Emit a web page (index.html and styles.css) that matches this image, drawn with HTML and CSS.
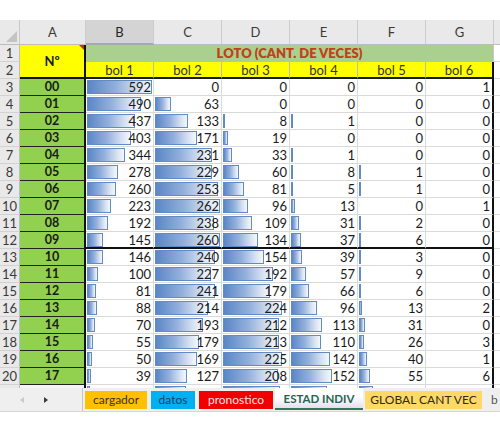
FILE: index.html
```html
<!DOCTYPE html>
<html>
<head>
<meta charset="utf-8">
<link rel="stylesheet" href="styles.css">
</head>
<body>
<div class="top"></div>
<div class="sheet">
  <div class="corner"><svg width="20" height="25" viewBox="0 0 20 25"><polygon points="17,11 17,22 6,22" fill="#C4C4C4"/></svg></div>
  <div class="ch">A</div>
  <div class="ch sel">B</div>
  <div class="ch">C</div>
  <div class="ch">D</div>
  <div class="ch">E</div>
  <div class="ch">F</div>
  <div class="ch">G</div>
  <div class="ch last"></div>

  <div class="rh">1</div>
  <div class="nom">Nº<span class="cmt"></span></div>
  <div class="title">LOTO (CANT. DE VECES)</div>
  <div class="h"></div>

  <div class="rh">2</div>
  <div class="bol">bol 1</div>
  <div class="bol">bol 2</div>
  <div class="bol">bol 3</div>
  <div class="bol">bol 4</div>
  <div class="bol">bol 5</div>
  <div class="bol g">bol 6</div>
  <div class="h"></div>

  <div class="rh">3</div><div class="a">00</div>
  <div class="c"><i class="bar" style="width:65px"></i><span class="v">592</span></div>
  <div class="c"><span class="v">0</span></div>
  <div class="c"><span class="v">0</span></div>
  <div class="c"><span class="v">0</span></div>
  <div class="c"><span class="v">0</span></div>
  <div class="c g"><span class="v">1</span></div><div class="h"></div>

  <div class="rh">4</div><div class="a">01</div>
  <div class="c"><i class="bar" style="width:54px"></i><span class="v">490</span></div>
  <div class="c"><i class="bar" style="width:16px"></i><span class="v">63</span></div>
  <div class="c"><span class="v">0</span></div>
  <div class="c"><span class="v">0</span></div>
  <div class="c"><span class="v">0</span></div>
  <div class="c g"><span class="v">0</span></div><div class="h"></div>

  <div class="rh">5</div><div class="a">02</div>
  <div class="c"><i class="bar" style="width:48px"></i><span class="v">437</span></div>
  <div class="c"><i class="bar" style="width:33px"></i><span class="v">133</span></div>
  <div class="c"><i class="bar" style="width:2px"></i><span class="v">8</span></div>
  <div class="c"><i class="bar" style="width:2px"></i><span class="v">1</span></div>
  <div class="c"><span class="v">0</span></div>
  <div class="c g"><span class="v">0</span></div><div class="h"></div>

  <div class="rh">6</div><div class="a">03</div>
  <div class="c"><i class="bar" style="width:44px"></i><span class="v">403</span></div>
  <div class="c"><i class="bar" style="width:42px"></i><span class="v">171</span></div>
  <div class="c"><i class="bar" style="width:5px"></i><span class="v">19</span></div>
  <div class="c"><span class="v">0</span></div>
  <div class="c"><span class="v">0</span></div>
  <div class="c g"><span class="v">0</span></div><div class="h"></div>

  <div class="rh">7</div><div class="a">04</div>
  <div class="c"><i class="bar" style="width:38px"></i><span class="v">344</span></div>
  <div class="c"><i class="bar" style="width:57px"></i><span class="v">231</span></div>
  <div class="c"><i class="bar" style="width:9px"></i><span class="v">33</span></div>
  <div class="c"><i class="bar" style="width:2px"></i><span class="v">1</span></div>
  <div class="c"><span class="v">0</span></div>
  <div class="c g"><span class="v">0</span></div><div class="h"></div>

  <div class="rh">8</div><div class="a">05</div>
  <div class="c"><i class="bar" style="width:31px"></i><span class="v">278</span></div>
  <div class="c"><i class="bar" style="width:57px"></i><span class="v">229</span></div>
  <div class="c"><i class="bar" style="width:16px"></i><span class="v">60</span></div>
  <div class="c"><i class="bar" style="width:2px"></i><span class="v">8</span></div>
  <div class="c"><i class="bar" style="width:2px"></i><span class="v">1</span></div>
  <div class="c g"><span class="v">0</span></div><div class="h"></div>

  <div class="rh">9</div><div class="a">06</div>
  <div class="c"><i class="bar" style="width:29px"></i><span class="v">260</span></div>
  <div class="c"><i class="bar" style="width:63px"></i><span class="v">253</span></div>
  <div class="c"><i class="bar" style="width:21px"></i><span class="v">81</span></div>
  <div class="c"><i class="bar" style="width:2px"></i><span class="v">5</span></div>
  <div class="c"><i class="bar" style="width:2px"></i><span class="v">1</span></div>
  <div class="c g"><span class="v">0</span></div><div class="h"></div>

  <div class="rh">10</div><div class="a">07</div>
  <div class="c"><i class="bar" style="width:24px"></i><span class="v">223</span></div>
  <div class="c"><i class="bar" style="width:65px"></i><span class="v">262</span></div>
  <div class="c"><i class="bar" style="width:25px"></i><span class="v">96</span></div>
  <div class="c"><i class="bar" style="width:4px"></i><span class="v">13</span></div>
  <div class="c"><span class="v">0</span></div>
  <div class="c g"><span class="v">1</span></div><div class="h"></div>

  <div class="rh">11</div><div class="a">08</div>
  <div class="c"><i class="bar" style="width:21px"></i><span class="v">192</span></div>
  <div class="c"><i class="bar" style="width:59px"></i><span class="v">238</span></div>
  <div class="c"><i class="bar" style="width:29px"></i><span class="v">109</span></div>
  <div class="c"><i class="bar" style="width:8px"></i><span class="v">31</span></div>
  <div class="c"><i class="bar" style="width:2px"></i><span class="v">2</span></div>
  <div class="c g"><span class="v">0</span></div><div class="h"></div>

  <div class="rh">12</div><div class="a">09</div>
  <div class="c r12"><i class="bar" style="width:16px"></i><span class="v">145</span></div>
  <div class="c r12"><i class="bar" style="width:65px"></i><span class="v">260</span></div>
  <div class="c r12"><i class="bar" style="width:35px"></i><span class="v">134</span></div>
  <div class="c r12"><i class="bar" style="width:10px"></i><span class="v">37</span></div>
  <div class="c r12"><i class="bar" style="width:2px"></i><span class="v">6</span></div>
  <div class="c r12 g"><span class="v">0</span></div><div class="h"></div>

  <div class="rh">13</div><div class="a">10</div>
  <div class="c"><i class="bar" style="width:16px"></i><span class="v">146</span></div>
  <div class="c"><i class="bar" style="width:60px"></i><span class="v">240</span></div>
  <div class="c"><i class="bar" style="width:41px"></i><span class="v">154</span></div>
  <div class="c"><i class="bar" style="width:11px"></i><span class="v">39</span></div>
  <div class="c"><i class="bar" style="width:2px"></i><span class="v">3</span></div>
  <div class="c g"><span class="v">0</span></div><div class="h"></div>

  <div class="rh">14</div><div class="a">11</div>
  <div class="c"><i class="bar" style="width:11px"></i><span class="v">100</span></div>
  <div class="c"><i class="bar" style="width:56px"></i><span class="v">227</span></div>
  <div class="c"><i class="bar" style="width:50px"></i><span class="v">192</span></div>
  <div class="c"><i class="bar" style="width:15px"></i><span class="v">57</span></div>
  <div class="c"><i class="bar" style="width:2px"></i><span class="v">9</span></div>
  <div class="c g"><span class="v">0</span></div><div class="h"></div>

  <div class="rh">15</div><div class="a">12</div>
  <div class="c"><i class="bar" style="width:9px"></i><span class="v">81</span></div>
  <div class="c"><i class="bar" style="width:60px"></i><span class="v">241</span></div>
  <div class="c"><i class="bar" style="width:47px"></i><span class="v">179</span></div>
  <div class="c"><i class="bar" style="width:18px"></i><span class="v">66</span></div>
  <div class="c"><i class="bar" style="width:2px"></i><span class="v">6</span></div>
  <div class="c g"><span class="v">0</span></div><div class="h"></div>

  <div class="rh">16</div><div class="a">13</div>
  <div class="c"><i class="bar" style="width:10px"></i><span class="v">88</span></div>
  <div class="c"><i class="bar" style="width:53px"></i><span class="v">214</span></div>
  <div class="c"><i class="bar" style="width:59px"></i><span class="v">224</span></div>
  <div class="c"><i class="bar" style="width:26px"></i><span class="v">96</span></div>
  <div class="c"><i class="bar" style="width:3px"></i><span class="v">13</span></div>
  <div class="c g"><span class="v">2</span></div><div class="h"></div>

  <div class="rh">17</div><div class="a">14</div>
  <div class="c"><i class="bar" style="width:8px"></i><span class="v">70</span></div>
  <div class="c"><i class="bar" style="width:48px"></i><span class="v">193</span></div>
  <div class="c"><i class="bar" style="width:56px"></i><span class="v">212</span></div>
  <div class="c"><i class="bar" style="width:31px"></i><span class="v">113</span></div>
  <div class="c"><i class="bar" style="width:6px"></i><span class="v">31</span></div>
  <div class="c g"><span class="v">0</span></div><div class="h"></div>

  <div class="rh">18</div><div class="a">15</div>
  <div class="c"><i class="bar" style="width:6px"></i><span class="v">55</span></div>
  <div class="c"><i class="bar" style="width:44px"></i><span class="v">179</span></div>
  <div class="c"><i class="bar" style="width:56px"></i><span class="v">213</span></div>
  <div class="c"><i class="bar" style="width:30px"></i><span class="v">110</span></div>
  <div class="c"><i class="bar" style="width:5px"></i><span class="v">26</span></div>
  <div class="c g"><span class="v">3</span></div><div class="h"></div>

  <div class="rh">19</div><div class="a">16</div>
  <div class="c"><i class="bar" style="width:5px"></i><span class="v">50</span></div>
  <div class="c"><i class="bar" style="width:42px"></i><span class="v">169</span></div>
  <div class="c"><i class="bar" style="width:59px"></i><span class="v">225</span></div>
  <div class="c"><i class="bar" style="width:39px"></i><span class="v">142</span></div>
  <div class="c"><i class="bar" style="width:8px"></i><span class="v">40</span></div>
  <div class="c g"><span class="v">1</span></div><div class="h"></div>

  <div class="rh">20</div><div class="a">17</div>
  <div class="c"><i class="bar" style="width:4px"></i><span class="v">39</span></div>
  <div class="c"><i class="bar" style="width:32px"></i><span class="v">127</span></div>
  <div class="c"><i class="bar" style="width:55px"></i><span class="v">208</span></div>
  <div class="c"><i class="bar" style="width:41px"></i><span class="v">152</span></div>
  <div class="c"><i class="bar" style="width:11px"></i><span class="v">55</span></div>
  <div class="c g"><span class="v">6</span></div><div class="h"></div>

  <div class="rh"></div><div class="a blank"></div>
  <div class="c"><i class="bar" style="width:3px"></i></div>
  <div class="c"><i class="bar" style="width:31px"></i></div>
  <div class="c"><i class="bar" style="width:57px"></i></div>
  <div class="c"><i class="bar" style="width:36px"></i></div>
  <div class="c"><i class="bar" style="width:14px"></i></div>
  <div class="c g"></div><div class="h"></div>
</div>

<div class="tabs">
  <div class="nav">
    <svg class="arr" width="8" height="10" viewBox="0 0 8 10"><polygon points="6,2 2,5 6,8" fill="#C9C9C9"/></svg>
    <svg class="arr" width="8" height="10" viewBox="0 0 8 10"><polygon points="2,2 6,5 2,8" fill="#3A3A3A"/></svg>
  </div>
  <div class="tab t-carg">cargador</div>
  <div class="tab t-datos">datos</div>
  <div class="tab t-pron">pronostico</div>
  <div class="tab t-estad">ESTAD INDIV</div>
  <div class="tab t-glob">GLOBAL CANT VEC</div>
  <div class="tab t-more">b</div>
</div>
<div class="bottom"></div>
</body>
</html>
```

FILE: styles.css
```css
* { box-sizing: border-box; }
body {
  margin: 0;
  background: #ffffff;
  font-family: Lato, "Liberation Sans", sans-serif;
  color: #1a1a1a;
  width: 500px;
  overflow: hidden;
}
.top { height: 20px; }

.sheet {
  display: grid;
  grid-template-columns: 20px 66px repeat(6, 68px) 6px;
  grid-template-rows: 25px repeat(21, 17px);
  height: 368px;
  overflow: hidden;
  font-size: 12.5px;
}
.sheet > div {
  position: relative;
  border-right: 1px solid #DADADA;
  border-bottom: 1px solid #DADADA;
  line-height: 16px;
  white-space: nowrap;
}

.corner { background: #E9E9E9; border-right-color: #C8C8C8 !important; border-bottom-color: #BDBDBD !important; }
.corner svg { display: block; }
.ch {
  background: #E9E9E9;
  color: #3a3a3a;
  text-align: center;
  line-height: 24px !important;
  border-right: 1px solid #CDCDCD !important;
  border-bottom: 1px solid #BDBDBD !important;
  font-size: 13px;
}
.ch.sel { background: #D4D4D4; color: #262626; border-bottom: 2px solid #A8A8A8 !important; }
.ch.last { border-right: none !important; }

.rh {
  background: #E9E9E9;
  color: #3a3a3a;
  text-align: center;
  font-size: 13px;
  border-right: 1px solid #BDBDBD !important;
  border-bottom: 1px solid #D2D2D2 !important;
}

.nom {
  grid-row: span 2;
  background: #FFFF00;
  font-weight: 700;
  font-size: 13px;
  display: flex;
  align-items: center;
  justify-content: center;
  border-right: 2px solid #111 !important;
  border-bottom: 2px solid #111 !important;
}
.cmt {
  position: absolute;
  top: 0;
  right: 0;
  width: 0;
  height: 0;
  border-top: 5px solid #B03A1C;
  border-left: 5px solid transparent;
}
.title {
  grid-column: span 6;
  background: #A9D08E;
  color: #C2401A;
  font-weight: 800;
  font-size: 13px;
  text-align center;
  text-align: center;
  border-right: 1px solid #C9C9C9 !important;
  border-bottom: 1px solid #BFBFBF !important;
}
.bol {
  background: #FFFF00;
  color: #333;
  text-align: center;
  font-size: 13px;
  border-right: 1px solid #BDBDBD !important;
  border-bottom: 2px solid #1a1a1a !important;
}

.a {
  background: #92D050;
  font-weight: 700;
  font-size: 12.5px;
  text-align: center;
  border-right: 2px solid #111 !important;
  border-bottom: 1px solid #222 !important;
}
.a.blank { background: #F4F4F4; }

.c {
  text-align: right;
  padding-right: 2px;
  font-size: 13px;
}
.v { position: relative; }
.bar {
  position: absolute;
  left: 1px;
  top: 1px;
  height: 14px;
  background: linear-gradient(90deg, #5B86C6 0%, #93B0DC 45%, #D6E1F2 80%, #F5F8FC 100%);
  border: 1px solid #5F8BC9;
}
.r12 { border-bottom: 2px solid #111 !important; }
.g { border-right: 2px solid #111 !important; }
.h { border-right: none !important; background: #fff; }

.tabs {
  display: flex;
  align-items: flex-start;
  height: 24px;
  background: #EFEFEF;
  border-bottom: 1px solid #D6D6D6;
  font-size: 12px;
  overflow: hidden;
}
.nav {
  width: 83px;
  height: 23px;
  display: flex;
  align-items: center;
  padding-left: 18px;
  gap: 16px;
  border-right: 1px solid #C6C6C6;
  flex: none;
}
.arr { display: block; }
.tab {
  flex: none;
  margin-top: 3px;
  height: 18px;
  line-height: 18px;
  text-align: center;
  color: #333;
}
.t-carg { width: 62px; margin-left: 2px; background: #FFC000; color: #3a3320; }
.t-datos { width: 44px; margin-left: 4px; background: #00B0F0; color: #1d3f66; }
.t-pron { width: 74px; margin-left: 4px; background: #F00000; color: #FCE4E4; }
.t-estad {
  width: 88px;
  margin-left: 2px;
  margin-top: 0;
  height: 22px;
  line-height: 21px;
  background: linear-gradient(180deg, #FFFFFF 0%, #FFFFFF 45%, #E6DDF0 100%);
  border-bottom: 2px solid #2F7A55;
  color: #1F6650;
  font-weight: 700;
  font-size: 11.5px;
}
.t-glob { width: 117px; margin-left: 2px; background: #FFD966; color: #2e2a1c; }
.t-more { margin-left: 9px; background: transparent; color: #555; }
.bottom { height: 28px; background: #fff; }
```
